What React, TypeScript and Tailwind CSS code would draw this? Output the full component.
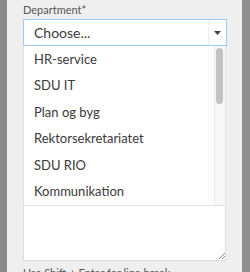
import React from "react";

const items = ["HR-service", "SDU IT", "Plan og byg", "Rektorsekretariatet", "SDU RIO", "Kommunikation"];

export default function App() {
  return (
    <div className="flex w-[250px] h-[272px] overflow-hidden" style={{ fontFamily: "Lato, 'Open Sans', sans-serif" }}>
      <div className="w-[7px] shrink-0 bg-[#8a8a8a]" />
      <div className="flex-1 bg-[#efefef] pl-[16px] pr-[15px] pt-[3px]">
        <div className="text-[11px] leading-[13px] text-[#555] mb-[3px]">Department*</div>
        <div className="relative">
          <div className="flex h-[27px] bg-white border border-[#a4c9ee]">
            <div className="flex-1 flex items-center pl-[10px] text-[14px] text-[#3a3a3a]">Choose...</div>
            <div className="w-[18px] border-l border-[#eeeeee] flex items-center justify-center">
              <svg width="7" height="4" viewBox="0 0 7 4"><path d="M0 0h7L3.5 4z" fill="#444" /></svg>
            </div>
          </div>
          <div className="h-[215px] bg-white border border-t-0 border-[#dddddd] mr-[1px]" />
          <div className="absolute left-0 top-[27px] w-[203px] h-[160px] bg-white border border-t-0 border-[#e2e2e2] flex overflow-hidden">
            <div className="flex-1 flex flex-col">
              {items.map((t) => (
                <div key={t} className="h-[26.5px] shrink-0 flex items-center pl-[10px] text-[13px] text-[#3a3a3a]">
                  {t}
                </div>
              ))}
            </div>
            <div className="w-[11px] bg-[#f8f8f8] border-l border-[#ebebeb] pt-[2px] pl-[1px]">
              <div className="w-[7px] h-[56px] rounded-full bg-[#c2c2c2]" />
            </div>
          </div>
          <div className="absolute right-[2px] bottom-[2px]">
            <svg width="6" height="6" viewBox="0 0 6 6"><path d="M6 0L0 6M6 3L3 6" stroke="#888" strokeWidth="1" /></svg>
          </div>
        </div>
        <div className="text-[11px] leading-[13px] text-[#555] mt-[5px] whitespace-nowrap">Use Shift + Enter for line break</div>
      </div>
      <div className="w-[8px] shrink-0 bg-[#8f8f8f]" />
    </div>
  );
}
